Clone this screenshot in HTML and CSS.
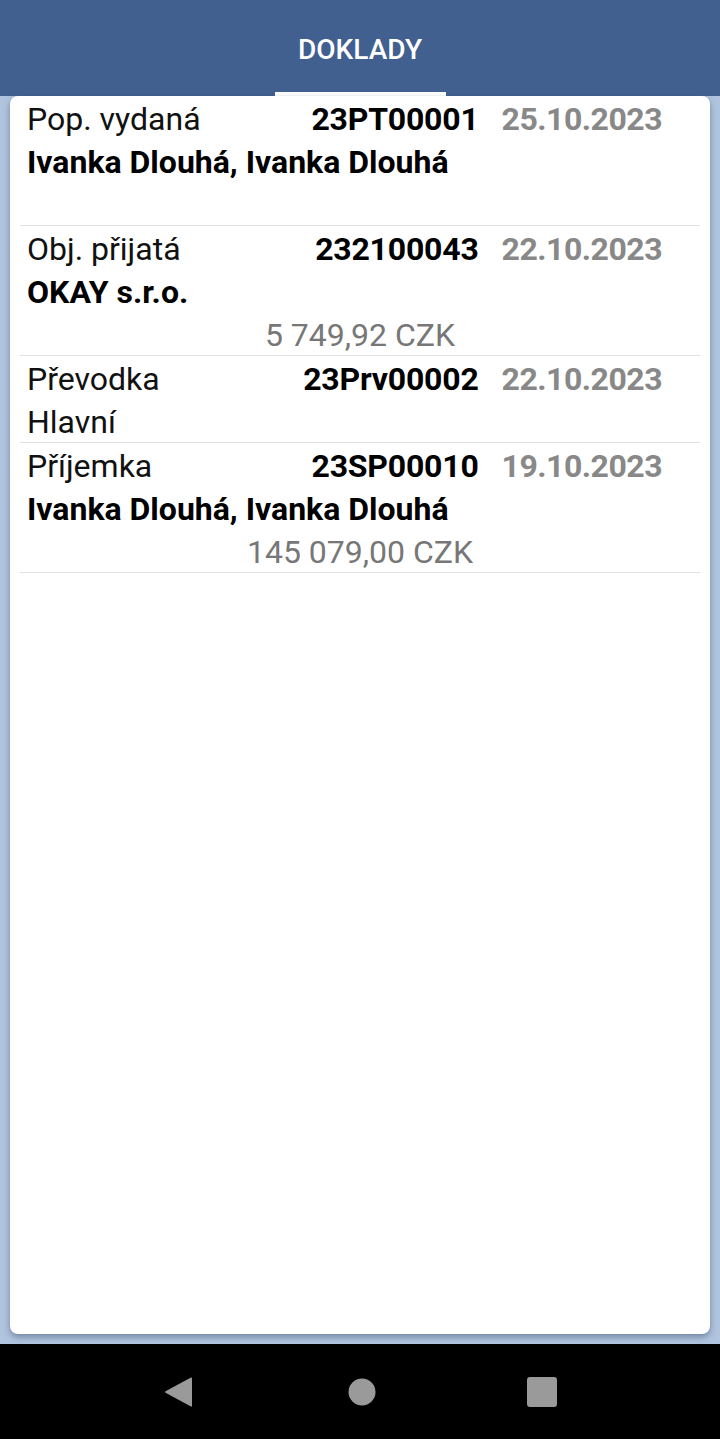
FILE: index.html
```html
<!DOCTYPE html>
<html lang="cs">
<head>
  <meta charset="UTF-8">
  <title>Doklady</title>
  <link rel="stylesheet" href="styles.css">
</head>
<body>

  <header class="app-bar">
    <div class="tab active">DOKLADY</div>
  </header>

  <main class="content">
    <div class="card">
      <ul class="doc-list">
        <li class="doc">
          <span class="doc-type">Pop. vydaná</span>
          <span class="doc-number">23PT00001</span>
          <span class="doc-date">25.10.2023</span>
          <span class="doc-partner">Ivanka Dlouhá, Ivanka Dlouhá</span>
          <span class="doc-amount"></span>
        </li>
        <li class="doc">
          <span class="doc-type">Obj. přijatá</span>
          <span class="doc-number">232100043</span>
          <span class="doc-date">22.10.2023</span>
          <span class="doc-partner">OKAY s.r.o.</span>
          <span class="doc-amount">5 749,92 CZK</span>
        </li>
        <li class="doc">
          <span class="doc-type">Převodka</span>
          <span class="doc-number">23Prv00002</span>
          <span class="doc-date">22.10.2023</span>
          <span class="doc-store">Hlavní</span>
        </li>
        <li class="doc">
          <span class="doc-type">Příjemka</span>
          <span class="doc-number">23SP00010</span>
          <span class="doc-date">19.10.2023</span>
          <span class="doc-partner">Ivanka Dlouhá, Ivanka Dlouhá</span>
          <span class="doc-amount">145 079,00 CZK</span>
        </li>
      </ul>
    </div>
  </main>

  <nav class="nav-bar">
    <svg class="nav-icon" width="30" height="32" viewBox="0 0 30 32">
      <path d="M27 1.5 Q28 1 28 2.5 V29.5 Q28 31 27 30.5 L1.5 16.8 Q0.5 16 1.5 15.2 Z" fill="#9a9a9a"/>
    </svg>
    <svg class="nav-icon" width="28" height="28" viewBox="0 0 28 28">
      <circle cx="14" cy="14" r="13.5" fill="#9a9a9a"/>
    </svg>
    <svg class="nav-icon" width="30" height="30" viewBox="0 0 30 30">
      <rect x="0" y="0" width="30" height="30" rx="3" fill="#9a9a9a"/>
    </svg>
  </nav>

</body>
</html>
```

FILE: styles.css
```css
* {
  box-sizing: border-box;
}

html, body {
  margin: 0;
  padding: 0;
}

body {
  font-family: Roboto, "Noto Sans", sans-serif;
  background-color: #b0c4de;
  height: 1439px;
  display: flex;
  flex-direction: column;
}

.app-bar {
  height: 96px;
  background-color: #41608f;
  display: flex;
  justify-content: center;
  align-items: stretch;
}

.tab {
  width: 171px;
  display: flex;
  align-items: center;
  justify-content: center;
  color: #ffffff;
  font-size: 28px;
  font-weight: 500;
  padding-top: 6px;
  border-bottom: 4px solid transparent;
}

.tab.active {
  border-bottom-color: #ffffff;
}

.content {
  flex: 1;
  padding: 0 10px 10px;
  display: flex;
}

.card {
  flex: 1;
  background-color: #ffffff;
  border-radius: 8px;
  box-shadow: 0 3px 6px rgba(40, 60, 90, 0.45);
  padding: 0 10px;
}

.doc-list {
  list-style: none;
  margin: 0;
  padding: 0;
}

.doc {
  display: grid;
  grid-template-columns: 1fr auto auto;
  column-gap: 23px;
  padding: 2px 38px 0 7px;
  border-bottom: 1px solid #e2e2e2;
  font-size: 32px;
  line-height: 43px;
  white-space: nowrap;
}

.doc > :last-child {
  margin-bottom: -2px;
}

.doc-type {
  color: #111;
}

.doc-number {
  font-weight: 700;
  color: #000;
  text-align: right;
  letter-spacing: -0.2px;
}

.doc-date {
  font-weight: 700;
  color: #888;
  letter-spacing: -0.5px;
}

.doc-partner {
  grid-column: 1 / -1;
  font-weight: 700;
  color: #000;
}

.doc-store {
  grid-column: 1 / -1;
  color: #111;
}

.doc-amount {
  grid-column: 1 / -1;
  height: 43px;
  text-align: center;
  color: #777;
  margin: 0 -38px 0 -7px;
}

.nav-bar {
  height: 95px;
  background-color: #000;
  display: flex;
  justify-content: center;
  align-items: center;
}

.nav-icon {
  display: block;
}

.nav-icon:nth-child(1) {
  margin-right: 154px;
}

.nav-icon:nth-child(2) {
  margin-right: 151px;
}
```
